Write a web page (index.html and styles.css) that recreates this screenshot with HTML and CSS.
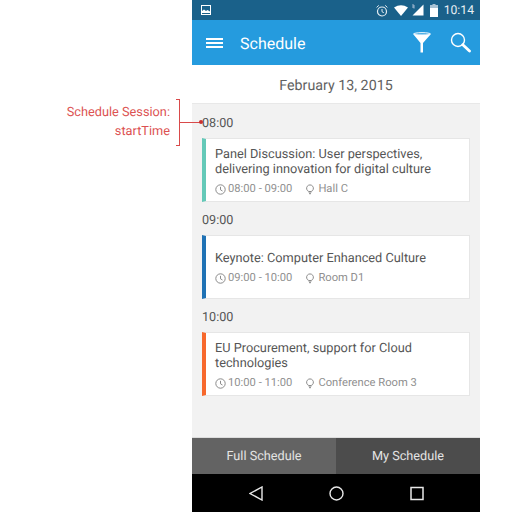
FILE: index.html
```html
<!DOCTYPE html>
<html lang="en">
<head>
    <meta charset="UTF-8">
    <meta name="viewport" content="width=device-width, initial-scale=1.0">
    <title>Schedule</title>
    <link rel="stylesheet" href="styles.css">
</head>
<body>
    <div class="note">
        <div class="note-text">Schedule Session:<br>startTime</div>
        <div class="note-bracket"></div>
        <div class="note-line"></div>
        <div class="note-dot"></div>
    </div>

    <div class="phone">
        <div class="status-bar">
            <svg class="status-pic" width="10" height="10" viewBox="0 0 10 10">
                <rect x="0.5" y="0.5" width="9" height="9" fill="none" stroke="#fff"/>
                <path d="M1 8V6l2-1.500L5 6l1.500-1L9 6.500V8z" fill="#fff"/>
            </svg>
            <div class="status-right">
                <svg width="12" height="13" viewBox="0 0 12 13">
                    <circle cx="6" cy="7.500" r="4.500" fill="none" stroke="#e6edf2" stroke-width="1.200"/>
                    <path d="M6 5v2.700l1.800 1M0.600 3.400L2.800 1.400M11.400 3.400L9.200 1.400" fill="none" stroke="#e6edf2"/>
                </svg>
                <svg width="14" height="11" viewBox="0 0 14 11">
                    <path d="M0 2.500Q7-2 14 2.500L7 11z" fill="#fff"/>
                </svg>
                <svg class="ico-signal" width="13" height="12" viewBox="0 0 13 12">
                    <path d="M12.500 0.500V11.500H1.500z" fill="#fff"/>
                    <path d="M1 1h2v3.500M1 3h2" fill="none" stroke="#dde" stroke-width="0.700"/>
                </svg>
                <svg width="8" height="13" viewBox="0 0 8 13">
                    <path d="M2.500 0h3v1H8v12H0V1h2.500z" fill="#a9c2d3"/>
                    <rect y="4" width="8" height="9" fill="#fff"/>
                </svg>
                <span class="clock">10:14</span>
            </div>
        </div>

        <div class="app-bar">
            <div class="menu-icon"><span></span><span></span><span></span></div>
            <div class="app-title">Schedule</div>
            <svg class="filter-icon" width="20" height="21" viewBox="0 0 20 21">
                <ellipse cx="10" cy="2" rx="8.500" ry="1.300" fill="none" stroke="#fff"/>
                <path d="M1.500 2.500L8.500 11V20.500H11V11L18.500 2.500z" fill="#fff"/>
            </svg>
            <svg class="search-icon" width="21" height="21" viewBox="0 0 21 21">
                <circle cx="8" cy="8" r="6.500" fill="none" stroke="#fff" stroke-width="1.400"/>
                <path d="M12.800 12.800L19.500 19" stroke="#fff" stroke-width="2.800" stroke-linecap="round"/>
            </svg>
        </div>

        <div class="date-bar">February 13, 2015</div>

        <div class="content">
            <div class="time time-first">08:00</div>
            <div class="card card-teal">
                <div class="card-title">Panel Discussion: User perspectives, delivering innovation for digital culture</div>
                <div class="card-meta">
                    <svg class="ico-clock" width="11" height="11" viewBox="0 0 11 11"><circle cx="5.500" cy="5.500" r="4.700" fill="none" stroke="#8a8a8a"/><path d="M5.500 2.800v3l2 1.200" fill="none" stroke="#8a8a8a"/></svg>
                    <span class="meta-time">08:00 - 09:00</span>
                    <svg class="ico-pin" width="8" height="11" viewBox="0 0 8 11"><path d="M2.800 7.500A3.400 3.400 0 1 1 5.200 7.500zM3 8.200L4 10.200 5 8.200" fill="none" stroke="#8a8a8a"/></svg>
                    <span>Hall C</span>
                </div>
            </div>

            <div class="time">09:00</div>
            <div class="card card-blue card-single">
                <div class="card-title">Keynote: Computer Enhanced Culture</div>
                <div class="card-meta">
                    <svg class="ico-clock" width="11" height="11" viewBox="0 0 11 11"><circle cx="5.500" cy="5.500" r="4.700" fill="none" stroke="#8a8a8a"/><path d="M5.500 2.800v3l2 1.200" fill="none" stroke="#8a8a8a"/></svg>
                    <span class="meta-time">09:00 - 10:00</span>
                    <svg class="ico-pin" width="8" height="11" viewBox="0 0 8 11"><path d="M2.800 7.500A3.400 3.400 0 1 1 5.200 7.500zM3 8.200L4 10.200 5 8.200" fill="none" stroke="#8a8a8a"/></svg>
                    <span>Room D1</span>
                </div>
            </div>

            <div class="time">10:00</div>
            <div class="card card-orange">
                <div class="card-title">EU Procurement, support for Cloud technologies</div>
                <div class="card-meta">
                    <svg class="ico-clock" width="11" height="11" viewBox="0 0 11 11"><circle cx="5.500" cy="5.500" r="4.700" fill="none" stroke="#8a8a8a"/><path d="M5.500 2.800v3l2 1.200" fill="none" stroke="#8a8a8a"/></svg>
                    <span class="meta-time">10:00 - 11:00</span>
                    <svg class="ico-pin" width="8" height="11" viewBox="0 0 8 11"><path d="M2.800 7.500A3.400 3.400 0 1 1 5.200 7.500zM3 8.200L4 10.200 5 8.200" fill="none" stroke="#8a8a8a"/></svg>
                    <span>Conference Room 3</span>
                </div>
            </div>
        </div>

        <div class="tabs">
            <div class="tab tab-active">Full Schedule</div>
            <div class="tab">My Schedule</div>
        </div>

        <div class="nav-bar">
            <svg width="14" height="15" viewBox="0 0 14 15"><path d="M13 1V14L1 7.500z" fill="none" stroke="#e8e8e8" stroke-width="1.400"/></svg>
            <svg width="15" height="15" viewBox="0 0 15 15"><circle cx="7.500" cy="7.500" r="6.500" fill="none" stroke="#e8e8e8" stroke-width="1.400"/></svg>
            <svg width="14" height="15" viewBox="0 0 14 15"><rect x="1" y="1.500" width="12" height="12" fill="none" stroke="#e8e8e8" stroke-width="1.500"/></svg>
        </div>
    </div>
</body>
</html>
```

FILE: styles.css
```css
* {
    margin: 0;
    padding: 0;
    box-sizing: border-box;
}

body {
    font-family: Roboto, 'Liberation Sans', sans-serif;
    text-rendering: geometricPrecision;
    background: #fff;
    width: 512px;
    height: 512px;
    overflow: hidden;
    position: relative;
}

.phone {
    width: 288px;
    height: 512px;
    margin-left: 192px;
    display: flex;
    flex-direction: column;
}

.status-bar {
    height: 20px;
    background: #1a618a;
    display: flex;
    align-items: center;
    justify-content: space-between;
    padding: 0 6px 0 9px;
}

.status-pic {
    display: block;
}

.status-right {
    display: flex;
    align-items: center;
    gap: 6px;
}

.ico-signal {
    margin-left: -3px;
}

.clock {
    color: #e8eff4;
    font-size: 12.2px;
    margin-left: 0;
}

.app-bar {
    height: 45px;
    background: #259bde;
    display: flex;
    align-items: center;
    padding: 0 9px 0 14px;
}

.menu-icon {
    width: 17px;
    display: flex;
    flex-direction: column;
    gap: 2px;
}

.menu-icon span {
    height: 2px;
    background: #fff;
}

.app-title {
    color: #fff;
    font-size: 16px;
    margin-left: 17px;
    padding-top: 1px;
    flex: 1;
}

.filter-icon {
    margin-right: 18px;
}

.date-bar {
    height: 39px;
    padding-top: 3px;
    background: #fff;
    color: #616161;
    font-size: 14.25px;
    display: flex;
    align-items: center;
    justify-content: center;
    border-bottom: 1px solid #e8e8e8;
}

.content {
    flex: 1;
    background: #f2f2f2;
    padding: 0 10px;
}

.time {
    height: 33px;
    padding-top: 11px;
    color: #555;
    font-size: 12.6px;
    line-height: 16px;
}

.time-first {
    height: 34px;
    padding-top: 12px;
}

.card {
    height: 64px;
    background: #fff;
    border: 1px solid #e6e6e6;
    border-left: 4px solid #ccc;
    padding: 8px 9px;
}

.card-teal {
    border-left-color: #64c9b8;
}

.card-blue {
    border-left-color: #1f72b5;
}

.card-orange {
    border-left-color: #f7682c;
}

.card-title {
    color: #555;
    font-size: 12.75px;
    line-height: 15px;
    height: 30px;
}

.card-single {
    padding-top: 15px;
}

.card-single .card-title {
    height: 15px;
}

.card-meta {
    display: flex;
    align-items: center;
    color: #8f8f8f;
    font-size: 11.2px;
    line-height: 14px;
    margin-top: 5px;
}

.ico-clock {
    margin-right: 2px;
}

.meta-time {
    margin-right: 14px;
}

.ico-pin {
    margin-right: 4px;
}

.tabs {
    height: 37px;
    display: flex;
    border-top: 1px solid #ddd;
}

.tab {
    flex: 1;
    background: #4c4c4c;
    color: #e4e4e4;
    font-size: 12.7px;
    display: flex;
    align-items: center;
    justify-content: center;
}

.tab-active {
    background: #636363;
}

.nav-bar {
    height: 38px;
    background: #000;
    display: flex;
    align-items: center;
    justify-content: center;
    gap: 66px;
}

/* annotation left of the phone */
.note {
    position: absolute;
    left: 0;
    top: 0;
}

.note-text {
    position: absolute;
    top: 103px;
    left: 0;
    width: 170px;
    text-align: right;
    color: #dc5252;
    font-size: 12.75px;
    line-height: 19px;
    white-space: nowrap;
}

.note-bracket {
    position: absolute;
    left: 176px;
    top: 99px;
    width: 4px;
    height: 47px;
    border: 1px solid #d94a4a;
    border-left: none;
}

.note-line {
    position: absolute;
    left: 180px;
    top: 122px;
    width: 21px;
    height: 1px;
    background: #d94a4a;
}

.note-dot {
    position: absolute;
    left: 199px;
    top: 120px;
    width: 4px;
    height: 4px;
    border-radius: 50%;
    background: #c93030;
}
```
